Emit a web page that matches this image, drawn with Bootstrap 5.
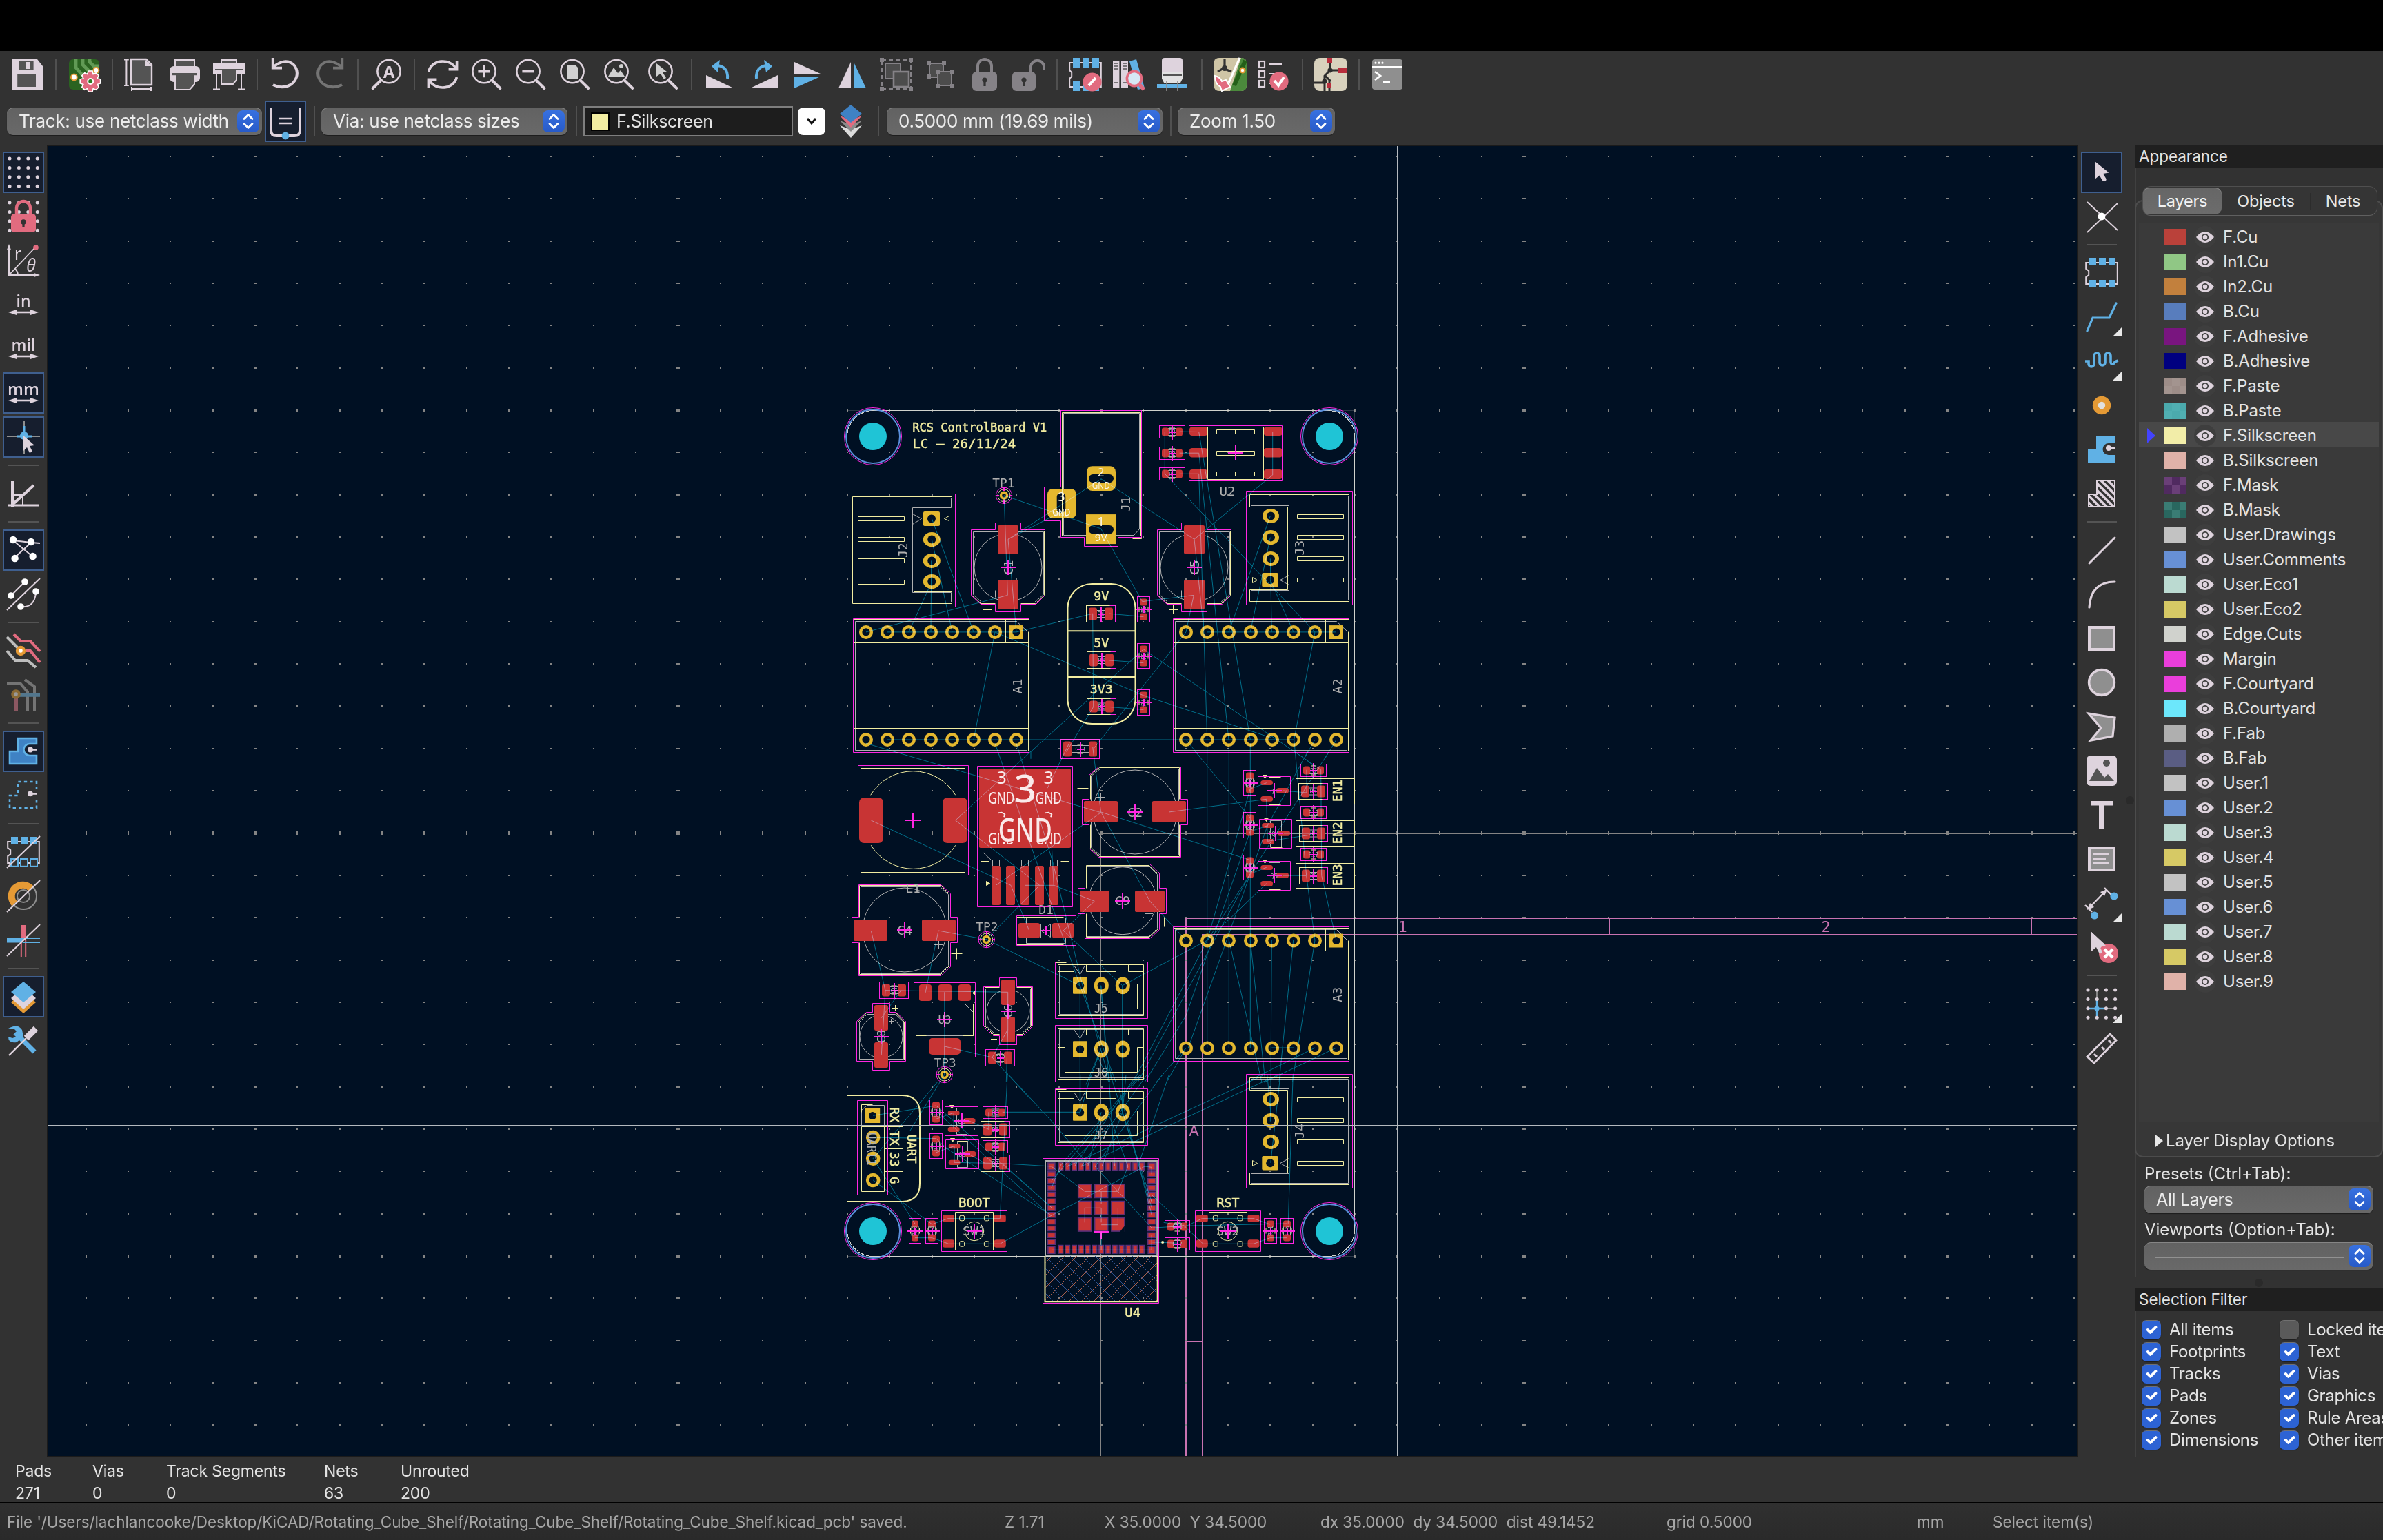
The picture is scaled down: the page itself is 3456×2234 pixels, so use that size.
<!DOCTYPE html>
<html lang="en">
<head>
<meta charset="utf-8">
<title>PCB Editor</title>
<link href="https://cdn.jsdelivr.net/npm/bootstrap@5.3.0/dist/css/bootstrap.min.css" rel="stylesheet">
<style>
  html, body { width: 3456px; height: 2234px; overflow: hidden; }
  body { background: #323232; color: #e3e3e3; font-family: Inter, "Liberation Sans", sans-serif; font-size: 24px; line-height: 1; }
  .menu-strip { height: 74px; background: #000; }
  .tool-row { height: 68px; }
  .row-icons { padding-left: 8px; }
  .row-picks { padding-left: 10px; }
  .tool { width: 60px; height: 60px; margin: 2px; padding: 0; border: 3px solid transparent; border-radius: 0; flex: none; position: relative; display: flex; align-items: center; justify-content: center; }
  .tool > svg { width: 48px; height: 48px; flex: none; overflow: visible; }
  .tool.picked { background: #161e2e; border: 2px solid #3f5f8f; }
  .tool .corner { position: absolute; right: -3px; bottom: -1px; width: 14px; height: 14px; }
  .vsep { width: 2px; height: 44px; margin: 0 8px; background: #505050; flex: none; }
  .hsep { height: 2px; width: 44px; margin: 8px 0; background: #545454; flex: none; }
  .side-left { width: 68px; padding-top: 8px; }
  .side-right { width: 82px; padding-top: 8px; padding-right: 14px; position: relative; }
  .side-right .grip { position: absolute; right: 1px; top: 945px; width: 12px; height: 12px; border-radius: 50%; background: #2a2a2a; }
  .board-frame { border: 2px solid #1b1b1b; width: 2946px; height: 1904px; flex: none; background: #001023; }
  .board-frame svg { display: block; }
  .work { height: 1904px; }
  .pick { height: 40px; border-radius: 9px; background: linear-gradient(#626262, #696969); box-shadow: inset 0 1px 0 #858585, 0 1px 1px #1c1c1c; color: #ececec; padding: 0 4px 0 17px; font-size: 25px; letter-spacing: -.35px; border: 0; flex: none; }
  .tool-row .pick { font-size: 26px; letter-spacing: -.3px; }
  .step { width: 32px; height: 32px; border-radius: 8px; background: linear-gradient(#3871e0, #275ac8); flex: none; }
  .layer-box { width: 304px; height: 44px; border: 2px solid #7e7e7e; background: #1d1d1d; padding-left: 9px; font-size: 25px; letter-spacing: -.3px; }
  .chip-color { width: 27px; height: 27px; background: #f2eda1; border: 2px solid #000; margin-right: 10px; }
  .drop-btn { width: 40px; height: 40px; border-radius: 8px; background: #fff; }
  .dock { width: 360px; }
  .dock-title { height: 34px; background: #1f1f1f; padding: 0 6px; font-size: 22.5px; letter-spacing: -.05px; }
  .dock-body { border-left: 2px solid #404040; }
  .tabs { width: 341px; height: 43px; margin: 26px 0 0 9px; border: 1px solid #4f4f4f; border-bottom-color: #606060; border-radius: 12px; background: #353535; position: relative; z-index: 1; flex-wrap: nowrap; }
  .tabs .nav-link { padding: 0; height: 39px; margin-top: 1px; color: #e6e6e6; border-radius: 9px; font-size: 23.5px; letter-spacing: -.2px; display: flex; align-items: center; justify-content: center; }
  .tabs .nav-link.active { background: linear-gradient(#666, #6c6c6c); box-shadow: inset 0 1px 0 #8a8a8a; color: #f2f2f2; }
  .layer-group { margin: -23px 0 0 -2px; width: 360px; height: 1389px; border: 2px solid #4c4c4c; border-radius: 12px; background: #373737; padding: 32px 4px 0 4px; }
  .layer-list { height: 1304px; background: #3a3a3a; width: 348px; }
  .layer-item { height: 36px; padding: 4px 0 0 12px; font-size: 24px; letter-spacing: -.15px; }
  .layer-item.current { background: #484848; }
  .layer-item .mark-slot { width: 24px; }
  .swatch-box { width: 32px; height: 24px; margin-right: 12px; background-size: 24px 24px; }
  .eye { width: 32px; height: 32px; border-radius: 50%; background: #3e3e3e; margin-right: 10px; }
  .display-toggle { height: 54px; padding-left: 24px; letter-spacing: -.1px; }
  .view-options { padding: 11px 0 0 12px; }
  .filter-grid { padding: 11px 0 0 8px; }
  .filter-grid .form-check { width: 200px; height: 32px; margin: 0; padding: 0; min-height: 0; display: flex; align-items: center; white-space: nowrap; flex: none; letter-spacing: -.3px; }
  .filter-grid .form-check-input { width: 28px; height: 28px; margin: 0 12px 0 0; float: none; border: 0; border-radius: 7px; background-color: #5a5a5a; flex: none; box-shadow: inset 0 1px 0 #707070, 0 1px 1px #1c1c1c; }
  .filter-grid .form-check-input:checked { background-color: #2d63d4; background-size: 26px; }
  .stats { height: 65px; padding: 4px 0 0 22px; font-size: 23px; letter-spacing: -.2px; line-height: 32px; }
  .status-line { height: 55px; border-top: 2px solid #000; background: linear-gradient(#303030, #2a2a2a); color: #a6a6a6; font-size: 22.5px; letter-spacing: -.02px; padding: 1px 0 0 10px; white-space: pre; }
  .status-line div { flex: none; }
  .status-line .file-note { letter-spacing: -.09px; }
</style>
</head>
<body class="d-flex flex-column m-0">
<div class="menu-strip flex-shrink-0"></div>

<header class="flex-shrink-0">
  <div class="tool-row row-icons d-flex align-items-center" data-tools="save | setup | page print plot | undo redo | find | refresh zin zout zfit zobj zsel | rotl rotr flipv fliph group ungroup lock unlock | fpedit fplib fpupd | sync drc | schem | term" data-sep="vsep"></div>
  <div class="tool-row row-picks d-flex align-items-center">
    <div class="pick d-flex align-items-center justify-content-between" style="width:370px"><span>Track: use netclass width</span><span class="step"></span></div>
    <div style="margin-left:2px" data-tools="*autow"></div>
    <div class="vsep" style="margin:0 9px 0 9px"></div>
    <div class="pick d-flex align-items-center justify-content-between" style="width:357px"><span>Via: use netclass sizes</span><span class="step"></span></div>
    <div class="vsep" style="margin:0 9px 0 12px"></div>
    <div class="layer-box d-flex align-items-center"><span class="chip-color"></span>F.Silkscreen</div>
    <div class="drop-btn d-flex align-items-center justify-content-center" style="margin-left:7px"><svg width="16" height="12" viewBox="0 0 16 12"><path d="M2 2l6 7 6-7" fill="none" stroke="#111" stroke-width="3"/></svg></div>
    <div style="margin-left:5px" data-tools="stack"></div>
    <div class="vsep" style="margin:0 11px 0 7px"></div>
    <div class="pick d-flex align-items-center justify-content-between" style="width:400px"><span>0.5000 mm (19.69 mils)</span><span class="step"></span></div>
    <div class="vsep" style="margin:0 9px 0 11px"></div>
    <div class="pick d-flex align-items-center justify-content-between" style="width:228px"><span>Zoom 1.50</span><span class="step"></span></div>
  </div>
</header>

<main class="work d-flex flex-shrink-0">
  <nav class="side-left d-flex flex-column align-items-center flex-shrink-0" data-tools="*grid gridlock polar in mil *mm *cursor | angle | *rats ratcurve | netcolor dimnet | *zonefill zoneout | fpout padout trackout | *layersicon wrench" data-sep="hsep"></nav>

  <section class="board-frame"><svg id="board" width="2942" height="1900" viewBox="70 212 2942 1900"></svg></section>

  <nav class="side-right d-flex flex-column align-items-center flex-shrink-0" data-tools="*arrow cross | addfp route+ tune+ via zone rulearea | line arc rect circle poly image text textbox dim+ delete | origin+ ruler" data-sep="hsep"></nav>

  <aside class="dock d-flex flex-column flex-shrink-0">
    <div class="dock-title d-flex align-items-center flex-shrink-0">Appearance</div>
    <div class="dock-body flex-shrink-0" style="height:1609px">
      <div class="tabs nav nav-pills d-flex">
        <a class="nav-link active" style="width:114px">Layers</a>
        <a class="nav-link" style="width:128px">Objects</a>
        <span style="width:2px;height:24px;background:#2c2c2c;margin-top:9px"></span>
        <a class="nav-link" style="width:92px">Nets</a>
      </div>
      <div class="layer-group">
        <div class="layer-list" id="layers"></div>
        <div class="display-toggle d-flex align-items-center"><svg width="11" height="18" viewBox="0 0 11 18" style="margin-right:4px"><path d="M0 0l11 9-11 9z" fill="#e8e8e8"/></svg>Layer Display Options</div>
      </div>
      <div class="view-options">
        <div style="height:30px;line-height:26px">Presets (Ctrl+Tab):</div>
        <div class="pick d-flex align-items-center justify-content-between" style="width:332px"><span>All Layers</span><span class="step"></span></div>
        <div style="height:42px;line-height:48px">Viewports (Option+Tab):</div>
        <div class="pick d-flex align-items-center justify-content-between" style="width:332px;padding-left:16px"><span style="width:274px;height:2px;background:#919191;margin-top:4px"></span><span class="step"></span></div>
      </div>
    </div>
    <div class="flex-shrink-0 d-flex align-items-center justify-content-center" style="height:15px"><span style="width:12px;height:12px;border-radius:50%;background:#2a2a2a"></span></div>
    <div class="dock-title d-flex align-items-center flex-shrink-0">Selection Filter</div>
    <div class="dock-body flex-grow-1 overflow-hidden">
      <div class="filter-grid" id="filters"></div>
    </div>
  </aside>
</main>

<section class="stats d-flex flex-shrink-0">
  <div style="width:112px">Pads<br>271</div><div style="width:107px">Vias<br>0</div><div style="width:229px">Track Segments<br>0</div><div style="width:111px">Nets<br>63</div><div>Unrouted<br>200</div>
</section>
<footer class="status-line d-flex align-items-center flex-shrink-0"><div class="file-note" style="width:1447px">File '/Users/lachlancooke/Desktop/KiCAD/Rotating_Cube_Shelf/Rotating_Cube_Shelf/Rotating_Cube_Shelf.kicad_pcb' saved.</div><div style="width:145px">Z 1.71</div><div style="width:313px">X 35.0000  Y 34.5000</div><div style="width:502px">dx 35.0000  dy 34.5000  dist 49.1452</div><div style="width:363px">grid 0.5000</div><div style="width:110px">mm</div><div>Select item(s)</div></footer>

<script src="https://cdn.jsdelivr.net/npm/bootstrap@5.3.0/dist/js/bootstrap.bundle.min.js"></script>
<script>
/* ---------- toolbar icons, drawn on a 24 unit grid ---------- */
const L='#ded3dd', B='#60b1e5', K='#e26b7f', G='#8f8f8f', D='#545454', O='#e59a35', N='#323232', Q='#858287';
const st=(c,w,d,x='')=>`<path d="${d}" fill="none" stroke="${c}" stroke-width="${w}" ${x}/>`;
const fl=(c,d,x='')=>`<path d="${d}" fill="${c}" ${x}/>`;
const ci=(c,x,y,r,e='')=>`<circle cx="${x}" cy="${y}" r="${r}" fill="${c}" ${e}/>`;
const re=(c,x,y,w,h,e='')=>`<rect x="${x}" y="${y}" width="${w}" height="${h}" fill="${c}" ${e}/>`;
const tx=(x,y,s,t,e='')=>`<text x="${x}" y="${y}" font-size="${s}" fill="${L}" text-anchor="middle" font-family="Open Sans, sans-serif" ${e}>${t}</text>`;
const lens=(x=0)=>`<circle cx="${x+10}" cy="9.8" r="8.3" fill="none" stroke="${L}" stroke-width="1.3"/>`+st(L,2,`M${x+15} 15.5L${x+22.3} 22.6`);
const slash=st(L,1,'M0 23.5L24 .5');
const dots=(x0,y0,dx,dy)=>{let s='';for(let i=0;i<4;i++)for(let j=0;j<4;j++)s+=ci(L,x0+i*dx,y0+j*dy,1.25);return s};
const unit=(t,s)=>tx(12,13.4,s,t,'font-weight="600"')+st(L,1.3,'M4 17.5H20')+fl(L,'M1 17.5l6-2v4z')+fl(L,'M23 17.5l-6-2v4z');
const fp=(bot=B)=>st(L,1,'M3 4.5H.6V9l2 1.5v3L.6 15v5H23.4V4.5H3')+[3,10,17].map(x=>re(B,x,1,5,5.4)+re(bot,x,17,5,5.4,bot===N?`stroke="${B}"`:'')).join('');
const hook='M1 20V11h6V2h14v3.5h-4.5a4.5 4.5 0 0 0 0 9H21V20z';
const ICON={
save:fl(L,'M1 1h18l4 5v17H1z')+re(D,5.8,2,10.5,7)+re(L,10.9,3,3,5)+re(D,4.6,12,13.4,9),
setup:re('#2a6320',1,1,22,22,'rx="3"')+st('#619a55',2.4,'M6 1v6l6 7v9M11 1v4l5 5h7M16 1v2l3 3h4')+ci('#fff',4.7,14,2.2,`stroke="${O}"`)+ci('#fff',20.7,9,2,`stroke="${O}"`)+fl(K,'M15 9.5h3l.6 2.3 2-1 2 2-1 2 2.2.7v3l-2.2.7 1 2-2 2-2-1-.6 2.3h-3l-.6-2.3-2 1-2-2 1-2-2.3-.7v-3l2.3-.7-1-2 2-2 2 1z','stroke="#fff" stroke-width=".8"')+ci('#2a7a20',16.6,17,2,'stroke="#fff"'),
page:fl(D,'M5 1h11l4 4v14.5H5z',`stroke="${L}" stroke-width="1.2"`)+fl(L,'M15 1v5h5z')+st(L,1,'M0 1.3h3.4M1.7 1v19M0 20h3.4M5.5 22.5h14M5.5 21v3M19.5 21v3'),
print:re(D,5,1.5,14,6,`stroke="${L}"`)+re(L,1,6,22,11.5,'rx="3"')+fl(D,'M5 12h14v7l-3.5 4H5z',`stroke="${L}"`)+re(D,3,11,18,1.6),
plot:re(D,6.5,1.5,11,6,`stroke="${L}"`)+re(L,.5,4,23,7.5)+fl(D,'M6.5 8h11v8l-2.5 3h-8.500z',`stroke="${L}"`)+re(D,2,8,20,1)+st(L,1,'M3 11v12M21 11v12M.5 22.700h5M18.500 22.700h5'),
undo:st(L,2,'M3.500 6.500C13-2 22.500 5 20 14 18 20.500 10 23 3 19.500')+st(L,1.8,'M2.800 0V7.300H9.500'),
redo:st('#747474',2,'M20.500 6.500C11-2 1.500 5 4 14 6 20.500 14 23 21 19.500')+st('#747474',1.8,'M21.200 0V7.300H14.500'),
find:`<circle cx="14" cy="9.800" r="8.300" fill="none" stroke="${L}" stroke-width="1.300"/>`+st(L,2,'M9 15.500L1.700 22.600')+tx(14,14.300,12,'A','font-weight="700"'),
refresh:st(L,1.800,'M1.800 10C4 1 17 0 21.500 7.500M22.200 14C20 23 7 24 2.500 16.500')+st(L,1.800,'M22.300 2v6.300h-6M1.700 22v-6.300h6'),
zin:lens()+st(L,1.800,'M10 5.500v8.600M5.700 9.800h8.600'),
zout:lens()+st(L,1.800,'M5.700 9.800h8.600'),
zfit:lens()+fl('#d0d0d0','M6.500 5h5.500l2 2v8H6.500z'),
zobj:lens()+fl('#d0d0d0','M4 13.500L8 7l3 4 2-2 3 4.500z')+ci('#d0d0d0',13.500,6,1.500),
zsel:lens()+fl('#d0d0d0','M7 4l7.500 6-3 .5 2.500 4-1.500 1-2.500-4L7 13.500z'),
rotl:fl(L,'M2 12.500V21.500H21z')+st(B,2,'M17.500 15C18 9 15 5.500 9 5.500')+fl(B,'M6 6l6-4.500-1.500 9z'),
rotr:fl(L,'M22 12.500V21.500H3z')+st(B,2,'M6.500 15C6 9 9 5.500 15 5.500')+fl(B,'M18 6l-6-4.500 1.500 9z'),
flipv:fl(L,'M2 3v8.500h19z')+fl(B,'M2 22v-8.500h19z'),
fliph:fl(L,'M11 3v19H2z')+fl(B,'M13 3v19h9z'),
group:`<rect x="1.500" y="1.500" width="21" height="21" fill="none" stroke="${Q}" stroke-dasharray="3 2"/>`+re('#4c4c4c',4,4,11,11,`stroke="${Q}"`)+re('#4c4c4c',10,10,11,11,`stroke="${Q}" stroke-width="1.300"`)+[[0,0],[21,0],[0,21],[21,21]].map(p=>re(Q,p[0],p[1],3,3)).join(''),
ungroup:re('#4c4c4c',4,4,10,10,`stroke="${Q}"`)+re('#4c4c4c',10,10,10,10,`stroke="${Q}"`)+[[2,2],[13,2],[2,12],[8.500,8.500],[19,8.500],[8.500,19],[19,19]].map(p=>re(Q,p[0],p[1],3,3)).join(''),
lock:re(Q,3,10,18,14,'rx="3"')+st(Q,2,'M7 11V6a5 5 0 0 1 10 0v5')+ci(N,12,16,1.800)+re(N,11.200,16,1.600,4.500),
unlock:re(Q,0,10,17,14,'rx="3"')+st(Q,2,'M13.500 11V6a4.800 4.800 0 0 1 9.500 0v3')+ci(N,8.500,16,1.800)+re(N,7.700,16,1.600,4.500),
fpedit:st(L,1,'M3 3.500H.6V9l1.500 1.500v3L.6 15v6H23.400V3.500H3')+[3,10,17].map(x=>re(B,x,0,5,7)+re(B,x,17,5,7)).join('')+ci(K,17,17.500,6.800)+st('#fff',2,'M14.500 20l5-5.500'),
fplib:re(L,0,2,4.700,20)+re(L,6,2,5,20)+fl(B,'M12 2.500l5-1.500 6 21-5 1z')+st(D,.8,'M1 4h3M1 6h3M1 8h3M7 4h3M7 6h3M7 8h3M1 18h3M7 18h3')+ci('#d6e8f5',15.500,15,5.300,`stroke="${K}" stroke-width="1.800"`)+st(K,2.600,'M19.500 19.500l3 3.500'),
fpupd:re(L,3.500,0,15,12,'rx="2"')+fl('#e2e2e2','M3.500 10h15v5l-1.500 3H5l-1.500-3z')+st(D,1,'M4 12.500h14')+re(B,0,19,22,3)+st(G,.8,'M7 17v7M15 17v7'),
sync:re('#cfc5a6',0,0,24,24,'rx="4"')+fl('#4b8a3c','M20 0q4 0 4 4v16q0 4-4 4H12z')+st('#245f18',3,'M23 2l-8 18')+st('#fff',1.600,'M19 0L11 18')+st('#333',1.600,'M8 1v6l-5 3M8 8l5 2')+ci('#333',8,7.500,2)+ci('#fff',21,9,1.700,`stroke="${O}" stroke-width="1.200"`)+fl(K,'M1 13q4 1 5 4l3-1 3 5-6 3-1-3q-4-2-4-8z','stroke="#fff" stroke-width="1"'),
drc:[2.500,9.500,16.500].map(y=>`<rect x="1" y="${y}" width="4" height="4.500" fill="none" stroke="${L}" stroke-width="1.100"/>`).join('')+st(L,1,'M8 4.500h9.500M8 11.500h5M8 18.500h3')+ci(K,15.500,17,6.800)+st('#fff',1.900,'M12 16.500l3 3.500 4-6'),
schem:re('#d8d1bd',0,0,24,24,'rx="4"')+st('#2d2d2d',1.500,'M11.500 4v5M11.500 9l8 0M11.500 9l-4 4v11M0 18h7M11 15v9M8 13l4 4')+re('#b82d3c',9,0,4,4)+re('#b82d3c',17.500,7,6.500,4)+re('#b82d3c',9,18.500,3,3.500)+ci('#2d2d2d',11.500,9,1.800)+ci('#2d2d2d',7.500,17,1.800),
term:re(G,1,1,22,22,'rx="2"')+re('#fff',1,6,22,1)+ci('#fff',3.500,3.600,.8)+ci('#fff',6,3.600,.8)+ci('#fff',8.500,3.600,.8)+st('#fff',1.400,'M3 10l4 3-4 3')+st('#fff',1.200,'M9 17.500h5'),
autow:st(L,2,'M1.500 2.500v16q0 4 4 4h13q4 0 4-4v-16')+st(L,1.200,'M7 10h10M7 13.500h10')+ci(B,12,22.500,2.700),
stack:fl('#dcdcdc','M4 15l8 9 8-9-8 3z')+fl('#8b8b8b','M4 11.500l8 8 8-8-8 3z')+fl(K,'M4 8l8 8.500L20 8l-8 3z')+fl('#3f82c4','M12 0l8 6.500-8 6.500-8-6.500z'),
grid:dots(2,2,6.700,6.700),
gridlock:dots(2,2,6.700,6.700)+re(K,3,10,18,13.500,'rx="2.500"')+st(K,2.200,'M7 10.500V6a5 5 0 0 1 10 0v4.500')+ci(N,12,16,1.900)+re(N,11.200,16.500,1.600,3.500),
polar:st(L,1.100,'M1.500 3V22.500H21')+fl(L,'M1.500 0l1.400 4H.1z')+fl(L,'M24 22.500l-4-1.400v2.800z')+st(L,.9,'M1.500 22.500L20 3M6 18q2 2 2 4.500')+ci(K,21,2.500,1.900)+tx(8,11.500,13,'r')+tx(17.500,20,12.500,'θ','font-style="italic"'),
in:unit('in',11.500), mil:unit('mil',11.500), mm:unit('mm',12),
cursor:st(G,1,'M12.500 0v24M0 11.500h24')+st(B,1.500,'M12.500 4v14M7 11.500h11')+ci(B,12.500,11,3)+fl(L,'M12 11l8 7-3.500.5 2 4-2 1-2-4-2.500 2.500z'),
angle:st(L,2,'M4 3v19')+st(L,1.600,'M1 20.500h22')+st(L,2,'M4 20L19.500 6')+st(L,1,'M4 13h7.500v7'),
rats:st(L,1,'M4.500 5l13 1.500 6.500.5M4.500 5l14 11.500M5.500 17.500l12-11')+[[4.500,4.500],[17.500,6],[5.800,18],[18.800,16.500]].map(p=>ci('#fff',p[0],p[1],2.600)).join(''),
ratcurve:st(L,1,'M0 23.500L24 .5M3 13L13 3M10 21q10 1 11-10')+[[3,13],[13,3],[21,10],[10,21]].map(p=>ci('#fff',p[0],p[1],2.400)).join(''),
netcolor:st(K,2,'M5 0l5 5h7l7 7.500M14 12h3l7 8.500')+st('#bdbdbd',2,'M0 2l9 9M0 12l6 7h9l6 5')+ci('#fff',10,12,2.500,`stroke="${O}" stroke-width="2.200"`),
dimnet:st('#747474',2,'M0 4h10l5 6v14M13 1l7 5v18')+st('#52768d',2.800,'M8 12h16')+st('#8c5862',3,'M6.500 13v11')+ci('#999',6.500,11.500,2.400,'stroke="#8a6a35" stroke-width="2"'),
zonefill:fl('#3f82c4','M2 21V12h6V2.500h13.500v4h-5a4.200 4.200 0 0 0 0 8.500h5v6z',`stroke="${B}" stroke-width="1.300"`)+st(L,1.400,'M16 10.700h6')+ci(L,17,10.700,2),
zoneout:`<path d="M2 21V12h6V2h13.500v5M21.500 15v6H2" fill="none" stroke="${B}" stroke-width="1.300" stroke-dasharray="2.200 2"/>`+st(L,1.400,'M16 10.700h6')+ci(L,17,10.700,1.900),
fpout:fp(N)+slash,
padout:`<circle cx="12" cy="12" r="9.500" fill="none" stroke="${G}"/><circle cx="12" cy="12" r="4.500" fill="none" stroke="${G}"/>`+st(O,5,'M5.500 17.500a7.800 7.800 0 0 1 12-11')+slash,
trackout:st(K,4,'M12 1v11')+st(K,1,'M10.400 12v12M13.600 12v12')+st(B,3.500,'M0 12h12')+st(B,1,'M12 10.500h12M12 13.500h12')+slash,
layersicon:fl(O,'M12 8l9 8-9 8-9-8z')+fl(L,'M12 5l9 8-9 8-9-8z')+fl(B,'M12 1l9 7.500-9 7.500-9-7.500z'),
wrench:st(B,3.500,'M6 6l14 14')+fl(B,'M1 3l4 0 3 3-1 3-3 1-3-1q0 5 6 4l5-4-1-5Q8-1 1 3z')+st(L,1.200,'M1.500 22.500L14 10')+st(L,4.500,'M14 10L21 3'),
arrow:fl(L,'M7 4v13l3.400-2.800 2 3.600q1.500 1.600 2.800 0 .4-.8-.2-1.600l-2-3.200 4.200-.8z'),
cross:st(L,.9,'M1.500 1.500L23.500 22M1.500 23.500L23.500 2.500')+ci('#fff',12,12,2.700),
addfp:fp(),
route:st(B,1.600,'M2 22L6 12.500h12L23 2','transform="translate(-.5 0)" stroke-linecap="round"'),
tune:st(B,1.800,'M0 12h2.500v2a2 2 0 0 0 4 0V8a2 2 0 0 1 4 0v5a2 2 0 0 0 4 0V8a2 2 0 0 1 4 0v4.500q0 2 2 1.500 1-2 3.500-2.500'),
via:ci('#e0e0e0',12,12,4.600,`stroke="${O}" stroke-width="4"`),
zone:fl(B,'M2 22V12h6V2h14v5.500h-5a3.800 3.800 0 0 0 0 8.500H22v6z')+st(L,1.600,'M17 11h5')+ci(L,17,11,2),
rulearea:`<clipPath id="ra"><path d="M2 22V12.500h6V2.500h14V22z"/></clipPath><g clip-path="url(#ra)">`+[-18,-13,-8,-3,2,7,12,17].map(x=>st(L,1.800,`M${x} -2L${x+26} 24`)).join('')+'</g>'+st(L,1,'M2.500 21.500V12.500h6V2.500h13V21.500z'),
line:st(L,1.500,'M3 21.500L21.500 3','stroke-linecap="round"'),
arc:st(L,1.600,'M3 21.500Q4 3 21.500 3','stroke-linecap="round"'),
rect:re(G,3,4,18,16,`stroke="${L}" stroke-width="2"`),
circle:ci(G,12,12,9.200,`stroke="${L}" stroke-width="1.800"`),
poly:fl(G,'M2.500 2.500l19 3L20 19 4 22l7.500-9z',`stroke="${L}" stroke-width="1.600"`),
image:re(L,1,1,22,22,'rx="3"')+fl(D,'M3 19.500L8.500 10l5.500 7 2.500-2.500L21 19.500z')+ci(D,15.500,6.500,2.500),
text:fl(L,'M4 2h16v3.200h-6V22h-4V5.200H4z'),
textbox:re(G,3,4,18,16,`stroke="${L}" stroke-width="2"`)+st(L,1.100,'M6 8.500h11.500M6 12h9M6 15h11'),
dim:st(L,1.200,'M2.500 16L15 3M14 1l5 5M0 13.500l5 5')+fl(L,'M1.500 17l2-5 3 3z')+fl(L,'M16 2l-2 5-3-3z')+ci(B,21,7,2.800)+ci(B,6.800,21,2.800),
delete:fl(L,'M4 .5v15l4-4 3 4h2l-1-4h4z')+ci(K,17,16.500,7)+fl(L,'M4 .5v15l4-3.500 2 4q2 1.500 2.500-.5l-2-4 4.500-.5z')+st('#fff',2.200,'M14 13.500l6 6M20 13.500l-6 6'),
origin:st(G,.9,'M8.500 1v22M2 15.500h20')+st(B,1.200,'M8.500 9v12M3 15.500h11')+dots(2,2,6.600,6.700)+ci(B,8.500,15.500,1.800),
ruler:st(L,1.500,'M1.500 18.500L18 2l4.500 4.500L6.500 23z')+st(L,1.500,'M6.500 16.500l2 2M12 11.500l2 2M17 6.500l2 2')
};
document.querySelectorAll('[data-tools]').forEach(bar=>{
  bar.innerHTML=bar.dataset.tools.split(' ').map(t=>{
    if(t==='|')return `<div class="${bar.dataset.sep}"></div>`;
    const on=t[0]==='*', more=t.endsWith('+'), n=t.replace(/[*+]/g,'');
    return `<button type="button" class="btn tool${on?' picked':''}" aria-label="${n}"><svg viewBox="0 0 24 24">${ICON[n]}</svg>${more?'<svg class="corner" viewBox="0 0 14 14"><path d="M14 0v14H0z" fill="#e8e8e8"/></svg>':''}</button>`;
  }).join('');
});
document.querySelector('.side-right').insertAdjacentHTML('beforeend','<span class="grip"></span>');
document.querySelectorAll('.step').forEach(s=>s.innerHTML='<svg width="32" height="32" viewBox="0 0 32 32"><path d="M10 12.500l6-6 6 6M10 19.500l6 6 6-6" fill="none" stroke="#fff" stroke-width="2.800" stroke-linecap="round" stroke-linejoin="round"/></svg>');

/* ---------- layer list and filters ---------- */
const chk=(a,b)=>`repeating-conic-gradient(${a} 0 25%, ${b} 0 50%)`;
const LAYERS=[['F.Cu','#ba413a'],['In1.Cu','#90c785'],['In2.Cu','#c2803d'],['B.Cu','#587dbd'],['F.Adhesive','#79157f'],['B.Adhesive','#000080'],['F.Paste',chk('#a3948f','#9d8d88')],['B.Paste',chk('#50afb2','#4baaad')],['F.Silkscreen','#f2eda8'],['B.Silkscreen','#e0b2a9'],['F.Mask',chk('#502a60','#6a3f78')],['B.Mask',chk('#29675f','#3a7c74')],['User.Drawings','#c2c2c2'],['User.Comments','#6790d5'],['User.Eco1','#bbdad1'],['User.Eco2','#d6c965'],['Edge.Cuts','#d0d2cd'],['Margin','#ea3edb'],['F.Courtyard','#ea3edb'],['B.Courtyard','#6ce7fb'],['F.Fab','#afafaf'],['B.Fab','#5a5d83'],['User.1','#c2c2c2'],['User.2','#6790d5'],['User.3','#bbdad1'],['User.4','#d6c965'],['User.5','#c2c2c2'],['User.6','#6790d5'],['User.7','#bbdad1'],['User.8','#d6c965'],['User.9','#e0b2a9']];
document.getElementById('layers').innerHTML=LAYERS.map(([n,c])=>`<div class="layer-item d-flex align-items-center${n==='F.Silkscreen'?' current':''}"><span class="mark-slot">${n==='F.Silkscreen'?'<svg width="12" height="22" viewBox="0 0 12 22" style="display:block"><path d="M0 0l12 11L0 22z" fill="#4343ff"/></svg>':''}</span><span class="swatch-box" style="background-image:${c[0]==='#'?`linear-gradient(${c},${c})`:c}"></span><span class="eye d-flex align-items-center justify-content-center"><svg width="26" height="16" viewBox="0 0 26 16"><path d="M0 8Q13-8 26 8 13 24 0 8z" fill="#ded3dd"/><circle cx="13" cy="8" r="4.200" fill="#ded3dd" stroke="#3e3e3e" stroke-width="1.800"/></svg></span>${n}</div>`).join('');
const FILT=[['All items','Locked items'],['Footprints','Text'],['Tracks','Vias'],['Pads','Graphics'],['Zones','Rule Areas'],['Dimensions','Other items']];
document.getElementById('filters').innerHTML=FILT.map(r=>'<div class="d-flex">'+r.map(t=>`<div class="form-check"><input class="form-check-input" type="checkbox" ${t==='Locked items'?'':'checked'}><label>${t}</label></div>`).join('')+'</div>').join('');

/* ---------- board drawing ---------- */
const SILK='#f2eda1', CY='#ff26e2', FAB='#afafaf', CU='#c83434', TH='#e3b72e', BG='#001023', SHEET='#c872b0';
const lay={sheet:[],grid:[],edge:[],fab:[],pads:[],silk:[],cy:[],cross:[],text:[],rats:[]};
let X0=0,Y0=0,SX=1,SY=1,OX=0,OY=0;
const sec=(a,b,c,d)=>{X0=a;Y0=b;SX=c;SY=d;};
const at=(dx,dy,f)=>{OX=dx;OY=dy;f();OX=0;OY=0;};
const px=u=>+(X0+OX+u/SX).toFixed(1), py=v=>+(Y0+OY+v/SY).toFixed(1);
const hx=u=>Math.floor(px(u))+.5, hy=v=>Math.floor(py(v))+.5;
const path=(l,c,w,a,close,fill='none')=>{const fx=w===1&&l!=='rats'&&l!=='text'?hx:px,fy=fx===hx?hy:py;let d='';for(let i=0;i<a.length;i+=2)d+=(i?'L':'M')+fx(a[i])+' '+fy(a[i+1]);lay[l].push(`<path d="${d}${close?'z':''}" fill="${fill}" stroke="${c}" stroke-width="${w}"/>`);};
const box=(l,c,x1,y1,x2,y2,w=1)=>path(l,c,w,[x1,y1,x2,y1,x2,y2,x1,y2],1);
const silk=(a,c,w=1)=>path('silk',SILK,w,a,c), fab=(a,c,w=1)=>path('fab',FAB,w,a,c), cy=(a)=>path('cy',CY,1,a,1), rat=(...a)=>path('rats','#006476',1,a,0);
const sbox=(a,b,c,d,w)=>box('silk',SILK,a,b,c,d,w), fbox=(a,b,c,d,w)=>box('fab',FAB,a,b,c,d,w), cbox=(a,b,c,d)=>box('cy',CY,a,b,c,d);
const pad=(x1,y1,x2,y2,r=3,c=CU,l='pads')=>lay[l].push(`<rect x="${px(x1)}" y="${py(y1)}" width="${(px(x2)-px(x1)).toFixed(1)}" height="${(py(y2)-py(y1)).toFixed(1)}" rx="${r}" fill="${c}"/>`);
const ring=(l,c,x,y,r,w=1,f='none')=>lay[l].push(`<circle cx="${px(x)}" cy="${py(y)}" r="${r}" fill="${f}" stroke="${c}" stroke-width="${w}"/>`);
const thp=(x,y,rx=10,ry=10,h=5.6)=>lay.pads.push(`<ellipse cx="${px(x)}" cy="${py(y)}" rx="${rx}" ry="${ry}" fill="${TH}"/><circle cx="${px(x)}" cy="${py(y)}" r="${h}" fill="${BG}"/>`);
const ths=(x1,y1,x2,y2,h=5.8,r=1)=>{pad(x1,y1,x2,y2,r,TH);lay.pads.push(`<circle cx="${px((x1+x2)/2)}" cy="${py((y1+y2)/2)}" r="${h}" fill="${BG}"/>`);};
const T=(x,y,s,size,c=FAB,rot=0,len=0,f='DejaVu Sans Mono',wt=400)=>lay.text.push(`<text transform="translate(${px(x)} ${py(y)}) rotate(${rot})" y="${(size*.365).toFixed(1)}" font-size="${size}" fill="${c}" ${wt===700?`stroke="${c}" stroke-width=".45"`:`font-weight="${wt}"`} font-family="${f}, monospace" text-anchor="middle" ${len?`textLength="${len}" lengthAdjust="spacingAndGlyphs"`:''}>${s}</text>`);
const X=(x,y,h=11)=>{const a=px(x),b=py(y);lay.cross.push(`<path d="M${a-h} ${b}h${2*h}M${a} ${b-h}v${2*h}" stroke="${CY}" stroke-width="2"/>`);};
const plus=(l,c,x,y,h)=>{const a=hx(x),b=hy(y);lay[l].push(`<path d="M${a-h} ${b}h${2*h}M${a} ${b-h}v${2*h}" stroke="${c}" fill="none"/>`);};
/* two-terminal part: courtyard given, pads at the ends of the long side */
const part=(x1,y1,x2,y2,name,led)=>{
  const a=hx(x1),b=hy(y1),w=hx(x2)-a,h=hy(y2)-b,v=h>w,k=Math.max(w,h)>39?12:10,i=3.500,j=3,cx=a+w/2,cyy=b+h/2;
  const p=(x,y,pw,ph)=>lay.pads.push(`<rect x="${x}" y="${y}" width="${pw}" height="${ph}" rx="3" fill="${CU}"/>`);
  if(v){p(a+i,b+j,w-2*i,k);p(a+i,b+h-j-k,w-2*i,k);}else{p(a+i,b+j,k,h-2*j);p(a+w-i-k,b+j,k,h-2*j);}
  lay.fab.push(v?`<path d="M${cx-5} ${b+11}v${h-22}M${cx+5} ${b+11}v${h-22}" stroke="${FAB}"/>`:`<path d="M${a+12} ${cyy-5}h${w-24}M${a+12} ${cyy+5}h${w-24}" stroke="${FAB}"/>`);
  if(!led)lay.silk.push(v?`<path d="M${cx-6.500} ${cyy-4}v8M${cx+6.500} ${cyy-4}v8" stroke="${SILK}"/>`:`<path d="M${cx-4} ${cyy-6.500}h8M${cx-4} ${cyy+6.500}h8" stroke="${SILK}"/>`);
  const m=led?SILK:CY;lay.cy.push(`<rect x="${a}" y="${b}" width="${w}" height="${h}" fill="none" stroke="${m}"/>`);
  if(led)lay.cy.push(`<path d="M${a+w-8} ${b}h8v${h}h-8" fill="none" stroke="${CY}"/>`);
  lay.cross.push(`<path d="M${cx-(v?11:5)} ${cyy}h${v?22:10}M${cx} ${cyy-(v?5:11)}v${v?10:22}" stroke="${CY}" stroke-width="2"/>`);
  lay.text.push(`<text transform="translate(${cx} ${cyy}) rotate(${v?-90:0})" y="3" font-size="8" fill="${FAB}" text-anchor="middle" font-family="DejaVu Sans Mono, monospace">${name}</text>`);
};

/* grid, origin axes, cursor, drawing sheet */
for(let i=-24;i<=23;i++)for(let j=-16;j<=14;j++){const w=i%10?2:5,h=j%10?2:5;lay.grid.push(`<rect x="${Math.round(1597+i*61.350-w/2)}" y="${Math.round(1208.500+j*61.350-h/2)}" width="${w}" height="${h}"/>`);}
path('sheet',SHEET,2,[3020,1332,1720,1332,1720,2120]);path('sheet',SHEET,2,[3020,1356,1744,1356,1744,2120]);
path('sheet',SHEET,2,[2334,1332,2334,1356]);path('sheet',SHEET,2,[2946,1332,2946,1356]);path('sheet',SHEET,2,[1720,1946,1744,1946]);
T(2034,1344,'1',22,SHEET);T(2648,1344,'2',22,SHEET);T(1731.500,1640,'A',22,SHEET,0,0,'Noto Sans');
path('edge','#848484',1,[1596,2120,1596,1209,3020,1209]);
lay.edge.push(`<rect x="1228.500" y="595.500" width="736" height="1227" rx="38" fill="none" stroke="#d0d2cd" stroke-width="1"/><path d="M1228.500 640V595.500H1290M1903 595.500H1964.500V640M1964.500 1778V1822.500H1903M1290 1822.500H1228.500V1778" fill="none" stroke="#d0d2cd" stroke-opacity=".2"/>`);
[[1266,633],[1928,633],[1266,1786],[1928,1786]].forEach(([x,y])=>{ring('pads','none',x,y,20,0,'#1fc4d6');ring('pads','#5a8fdc',x,y,39,2);ring('cy',CY,x,y,41.500);});

/* ---- upper half ---- */
sec(1210,570,3,2.958);
T(632,146,'RCS_ControlBoard_V1',18,SILK,0,195,'DejaVu Sans Mono',700);T(565,217,'LC – 26/11/24',18,SILK,0,150,'DejaVu Sans Mono',700);
cy([986,76,1337,76,1337,619,1235,619,1235,658,1088,658,1088,619,986,619,986,548,914,548,914,403,986,403]);
silk([1095,614,992,614,992,84,1332,84,1332,614,1224,614]);silk([1296,625,1337,625,1337,585]);
fab([1095,611,996,611,996,88,1328,88,1328,583,1302,611,1224,611]);fab([996,214,1328,214]);
pad(1098,314,1224,420,8,TH);pad(1107,349,1215,385,6,BG);pad(927,411,1053,538,8,TH);pad(968,428,1006,515,6,BG);pad(1095,521,1224,648,0,TH);pad(1107,568,1215,605,6,BG);
T(1160,340,'2',17,'#fbf7ea',0,0,'Noto Sans');T(1160,397,'GND',14,'#fbf7ea',0,26,'Noto Sans');T(988,444,'3',18,'#fbf7ea',0,0,'Noto Sans');T(988,511,'GND',14,'#fbf7ea',0,26,'Noto Sans');T(1160,551,'1',18,'#fbf7ea',0,0,'Noto Sans');T(1160,620,'9V',14,'#fbf7ea',0,18,'Noto Sans');
T(1268,477,'J1',18,FAB,-90);
const tp=(x,y)=>{ring('pads',TH,x,y,4.500,3.500,BG);ring('silk',SILK,x,y,9);ring('cy',CY,x,y,11.700);lay.cross.push(`<path d="M${px(x)-12} ${py(y)}h5M${px(x)+7} ${py(y)}h5M${px(x)} ${py(y)-12}v5M${px(x)} ${py(y)+7}v5" stroke="${CY}" stroke-width="2"/>`);};
T(736,385,'TP1',18,FAB,0,32);tp(738,440);
/* J2 */
cbox(64,433,526,918);silk([80,446,512,446,512,498,346,498,346,853,512,853,512,903,80,903],1);fab([85,451,509,451,509,493,341,493,341,857,509,857,509,899,85,899],1);
[531,619,711,803].forEach(y=>sbox(103,y,305,y+18));silk([500,529,478,539,500,550],1);fab([341,518,379,539,341,562]);
ths(387,509,459,571,6,2);[629,720,809].forEach(y=>thp(424,y,12.500,10.500,6));T(297,675,'J2',18,FAB,-90);
/* C1, C5 */
[[0,'C1'],[270,'C5']].forEach(([d,n])=>at(d,0,()=>{
  cy([596,587,700,587,700,557,811,557,811,587,917,587,917,868,878,906,811,906,811,939,700,939,700,906,636,906,596,868]);
  silk([700,593,599,593,599,868,638,903,700,903]);silk([811,593,914,593,914,868,874,903,811,903]);
  fab([603,597,909,597,909,866,872,899,640,899,603,866],1);ring('fab',FAB,756,749,49);
  pad(711,568,801,691,2);pad(711,802,801,929,2);plus('silk',SILK,664,930,6.500);plus('fab',FAB,700,862,5);T(756,749,n,18,FAB,-90);X(756,748);}));
/* power LEDs */
lay.silk.push(`<rect x="1548.500" y="847" width="98" height="203" rx="35" fill="none" stroke="${SILK}" stroke-width="2"/>`);
silk([1015,1021,1309,1021],0,2);silk([1015,1219,1309,1219],0,2);
T(1162,871,'9V',18,SILK,0,22,'DejaVu Sans Mono',700);T(1162,1071,'5V',18,SILK,0,22,'DejaVu Sans Mono',700);T(1162,1270,'3V3',18,SILK,0,33,'DejaVu Sans Mono',700);
part(1097,913,1221,982,'D4',1);part(1100,1111,1224,1181,'D3',1);part(1100,1312,1224,1381,'D2',1);
part(986,1487,1153,1568,'C13');
/* stepper driver modules */
[[0,0,'A1'],[464,0,'A2'],[464,447.500,'A3']].forEach(([dx,dy,n])=>at(dx,dy,()=>{
  cbox(82,968,848,1543);silk([86,973,848,973,848,1025]);silk([845,1025,845,1537,86,1537,86,973]);fab([792,979,91,979,91,1533,839,1533,839,1022,792,979]);
  silk([86,1072,845,1072]);silk([86,1439,845,1439]);silk([745,973,745,1072]);
  [138,231,324,420,513,606,699].forEach(x=>thp(x,1026));ths(762,997,822,1056,5.600,0);[138,231,324,420,513,606,699,792].forEach(x=>thp(x,1488));
  T(795,1258,n,18,FAB,-90);}));
sec(1580,570,3,2.958);
part(304,140,416,193,'R3');part(304,232,416,286,'R2');part(304,320,416,374,'R1');
cbox(433,140,839,377);[[146,183],[237,277],[328,370]].forEach(([a,b])=>{pad(435,a,514,b,4);pad(758,a,839,b,4);});
sbox(514,146,758,371);[158,250,339].forEach(y=>{sbox(553,y,719,y+18);silk([635,y,635,y+18]);});X(636,257);T(600,421,'U2',18,FAB,0,23);
[[0,'J3'],[846,'J4']].forEach(([dy,n])=>at(0,dy,()=>{
  cbox(682,421,1145,909);silk([697,436,1130,436,1130,894,697,894,697,845,863,845,863,489,697,489],1);fab([703,442,1126,442,1126,890,703,890,703,848,868,848,868,484,703,484],1);
  [522,611,702,794].forEach(y=>sbox(904,y,1106,y+18));silk([709,792,731,803,709,814],1);fab([868,782,830,803,868,824]);
  ths(751,772,822,833,6,2);[528,620,711].forEach(y=>thp(789,y,12,10.500,6));T(913,665,n,18,FAB,-90);}));
part(208,874,263,983,'R6');part(208,1075,263,1181,'R5');part(208,1273,263,1383,'R4');

/* ---- middle ---- */
sec(1210,1090,3,3);
cbox(103,62,584,538);sbox(115,73,569,526);pad(108,201,213,399,7);pad(471,201,579,399,7);X(342,300);T(342,594,'L1',18);
lay.silk.push(`<path d="M${px(158)} ${py(190)}A72 72 0 0 1 ${px(527)} ${py(190)}M${px(160)} ${py(409)}A72 72 0 0 0 ${px(527)} ${py(409)}" fill="none" stroke="${SILK}"/>`);
cbox(622,64,1037,676);pad(630,75,1029,420,2);fab([646,420,646,438,682,472,1013,472,1013,420]);silk([637,424,637,478,674,478]);silk([1022,424,1022,478,985,478]);
[684,747,810,873,936].forEach(x=>{pad(x,498,x+39,669,2.500);fab([x+4,472,x+4,498]);fab([x+34,472,x+34,498]);});path('silk',SILK,1,[660,564,676,574,660,584],1,SILK);
const W='#faeaea',NS='Noto Sans';
[[728,115],[932,115]].forEach(p=>T(p[0],p[1],'3',25,W,0,0,NS));[[727,203],[932,203],[727,381],[932,381]].forEach(p=>T(p[0],p[1],'GND',23,W,0,38,NS));
path('text',W,1.800,[712,268,728,266,742,274,738,286]);path('text',W,1.800,[916,268,932,266,946,274,942,286]);
T(830,160,'3',57,W,0,0,NS,500);lay.text.push(`<rect x="1449" y="1187" width="75" height="34" fill="${CU}"/>`);T(830,340,'GND',47,W,0,78,NS,500);
T(921,688,'D1',18);cbox(793,715,1051,844);silk([996,722,793,722,793,841,996,841]);fbox(835,724,1006,836);pad(801,747,894,812);pad(948,747,1041,812);fab([898,752,898,810]);fab([940,752,900,781,940,808],1);X(921,780,7);
cy([106,580,464,580,506,620,506,722,536,722,536,832,506,832,506,936,464,976,106,976,106,832,76,832,76,722,106,722]);
silk([110,722,110,583,463,583,500,620,500,722]);silk([110,832,110,970,463,970,500,934,500,832]);fab([115,588,460,588,497,622,497,932,460,967,115,967],1);ring('fab',FAB,306,777,61);pad(84,732,231,825,2);pad(381,732,528,825,2);T(306,777,'C4',18,FAB,0,22);X(306,777);plus('silk',SILK,531,880,8);plus('fab',FAB,455,842,6.500);
T(664,763,'TP2',18,FAB,0,32);tp(662,819);T(482,1353,'TP3',18,FAB,0,32);tp(479,1407);
part(196,1003,323,1076,'C7');part(658,1297,785,1369,'C12');
cbox(346,1006,614,1331);[[369,423],[453,510],[540,594]].forEach(([a,b])=>pad(a,1014,b,1086,3.500));pad(411,1248,549,1320,5);silk([355,1098,355,1237,400,1237]);silk([605,1100,605,1237,558,1237]);fab([355,1100,567,1100,605,1135,605,1237,355,1237],1);path('silk',SILK,1,[614,1043,600,1052,614,1061],1,SILK);T(480,1166,'U3',16);X(480,1166);
cy([97,1174,139,1136,166,1136,166,1096,242,1096,242,1136,269,1136,311,1174,311,1348,242,1348,242,1387,166,1387,166,1348,97,1348]);silk([166,1139,140,1139,104,1176,104,1342,166,1342]);silk([242,1139,268,1139,304,1176,304,1342,242,1342]);fab([108,1178,142,1143,266,1143,301,1178,301,1338,108,1338],1);ring('fab',FAB,204,1241,31);pad(174,1104,234,1215,2.500);pad(174,1266,234,1377,2.500);T(204,1241,'C8',16,FAB,-90);X(204,1241);plus('silk',SILK,265,1118,4.500);plus('fab',FAB,247,1174,3.500);
cy([650,1024,718,1024,718,985,794,985,794,1024,862,1024,862,1196,820,1236,794,1236,794,1276,718,1276,718,1236,692,1236,650,1196]);silk([718,1028,656,1028,656,1194,692,1230,718,1230]);silk([794,1028,857,1028,857,1194,820,1230,794,1230]);fab([659,1033,853,1033,853,1192,818,1226,694,1226,659,1192],1);ring('fab',FAB,756,1130,31);pad(726,993,786,1104,2.500);pad(726,1155,786,1266,2.500);T(756,1130,'C6',16,FAB,-90);X(756,1130);plus('silk',SILK,694,1252,4.500);plus('fab',FAB,712,1195,3.500);
/* J5 J6 J7 */
[[0,'J5'],[92.300,'J6'],[184,'J7']].forEach(([dy,n])=>at(0,dy,()=>{
  cbox(961,916,1362,1162);sbox(973,928,1346,1150);fbox(979,934,1341,1144);silk([973,958,1042,958,1042,928]);silk([1096,928,1096,958,1225,958,1225,928]);silk([1279,928,1279,958,1346,958]);silk([973,1012,1003,1012,1003,1120,1318,1120,1318,1012,1346,1012]);silk([965,970,965,919,1010,919]);fab([1042,932,1070,971,1090,932]);
  ths(1038,984,1101,1055,5.700,1);thp(1162,1019,10.500,12.500,5.700);thp(1255,1019,10.500,12.500,5.700);T(1160,1118,n,18,FAB,0,20);}));
sec(1580,1090,3,3);
cy([40,66,398,66,398,208,428,208,428,320,398,320,398,460,40,460,-1,420,-1,320,-32,320,-32,208,-1,208,-1,104]);silk([5,208,5,104,44,71,392,71,392,208]);silk([5,320,5,420,44,456,392,456,392,320]);fab([8,106,46,75,388,75,388,452,46,452,8,418],1);ring('fab',FAB,198,264,61);pad(-24,216,123,309,2);pad(273,216,420,309,2);T(198,264,'C2',18,FAB,0,22);X(198,264);plus('silk',SILK,-29,160,8);plus('fab',FAB,50,199,6.500);
cy([-20,491,262,491,304,528,304,595,335,595,335,706,304,706,304,775,262,814,-20,814,-20,706,-50,706,-50,595,-20,595]);silk([-14,595,-14,496,260,496,299,532,299,595]);silk([-14,706,-14,808,260,808,299,772,299,706]);fab([-11,500,258,500,295,534,295,770,258,804,-11,804],1);ring('fab',FAB,144,650,49);pad(-42,606,87,699,2);pad(198,606,327,699,2);T(144,650,'C9',18,FAB,0,22);X(144,650);plus('silk',SILK,326,743,7);plus('fab',FAB,260,707,5.500);
part(670,82,725,190,'R10');part(670,265,725,376,'R12');part(670,451,725,559,'R16');
const qfet=(x,y,n)=>{cbox(x,y,x+142,y+126);pad(x+12,y+17,x+65,y+38,3.500);pad(x+12,y+86,x+65,y+109,3.500);pad(x+80,y+50,x+134,y+73,3.500);fbox(x+48,y+6,x+97,y+120);silk([x+48,y+4,x+98,y+4]);silk([x+48,y+122,x+98,y+122]);path('silk',SILK,1,[x+20,y-6,x+38,y-6,x+29,y+8],1,SILK);X(x+70,y+62);T(x+70,y+63,n,9);};
qfet(733,109,'Q1');qfet(739,295,'Q4');qfet(733,478,'Q5');
part(919,55,1031,110,'R7');part(919,238,1031,293,'R13');part(919,421,1031,476,'R17');
sbox(898,118,1153,230);sbox(898,301,1153,412);sbox(898,487,1153,595);
part(910,139,1037,208,'D5',1);part(913,322,1037,391,'D8',1);part(913,505,1037,577,'D9',1);
[['EN1',171],['EN2',355],['EN3',538]].forEach(([n,y])=>T(1078,y,n,18,SILK,-90,32,'DejaVu Sans Mono',700));

/* ---- lower part ---- */
sec(1210,1560,2.010,3);
lay.silk.push(`<path d="M1228.500 1589H1309Q1334 1590 1334 1615V1717Q1334 1742 1309 1743H1228.500" fill="none" stroke="${SILK}" stroke-width="2"/>`);
cbox(67,109,156,521);sbox(79,222,146,505);silk([146,222,199,222]);silk([146,320,199,320]);silk([146,418,199,418]);silk([79,160,79,127,112,127]);fab([80,222,80,150,96,130,145,130,145,222]);
T(110,320,'UART1',18,FAB,90,48);ths(90,144,133,207,5.500,0);[270,362,456].forEach(y=>thp(113,y,10.300,10.300,5.500));
[['RX',172,22],['TX',272,22],['33',365,22],['G',457,10],].forEach(([n,y,l])=>T(176,y,n,17,SILK,90,l,'DejaVu Sans Mono',700));T(226,320,'UART',18,SILK,90,42,'DejaVu Sans Mono',700);
part(278,106,315,214,'R18');part(278,254,315,361,'R19');part(433,136,506,187,'R8');part(433,283,506,338,'R9');part(427,199,512,272,'D6',1);part(427,346,512,419,'D7',1);
const qs=(x,y,n)=>{cbox(x,y,x+96,y+126);pad(x+8,y+17,x+42,y+39,3.500);pad(x+8,y+88,x+42,y+110,3.500);pad(x+53,y+50,x+88,y+74,3.500);fbox(x+33,y+7,x+64,y+120);silk([x+33,y+5,x+64,y+5]);path('silk',SILK,1,[x+14,y-6,x+25,y-6,x+20,y+10],1,SILK);X(x+48,y+63);T(x+48,y+63,n,9);};
qs(323,136,'Q2');qs(325,280,'Q3');
T(408,552,'BOOT',18,SILK,0,46,'DejaVu Sans Mono',700);T(1148,552,'RST',18,SILK,0,33,'DejaVu Sans Mono',700);
[[0,'SW1'],[367.700,'SW2']].forEach(([dx,n])=>at(dx,0,()=>{cbox(313,589,504,767);sbox(353,595,463,761);[[606,639],[715,749]].forEach(([a,b])=>{pad(316,a,350,b);pad(466,a,500,b);});ring('silk',SILK,408,678,13.700);[[365,610],[437,610],[365,722],[437,722]].forEach(p=>lay.silk.push(`<rect x="${px(p[0])}" y="${py(p[1])}" width="7" height="7.500" rx="2" fill="none" stroke="${SILK}"/>`));T(408,677,n,18,FAB,0,34);X(408,678);}));
part(218,622,252,731,'R20');part(266,622,303,731,'C14');part(1253,622,1289,731,'R21');part(1302,622,1338,731,'C15');part(964,631,1036,685,'C16');part(964,706,1036,761,'C17');
lay.silk.push(`<circle cx="${px(957)}" cy="${py(726)}" r="2" fill="${SILK}"/>`);
/* U4 module */
cbox(608,361,946,992);fbox(615,372,941,783,2);
lay.fab.push(`<defs><pattern id="ha" width="18" height="18" patternUnits="userSpaceOnUse"><path d="M-2 20L20 -2M7 29L29 7" stroke="#a8604f" stroke-width="1"/><path d="M-2 -2L20 20" stroke="#2f528f" stroke-width="1"/></pattern></defs><rect x="${px(616)}" y="${py(786)}" width="162" height="65" fill="url(#ha)"/>`);
silk([614,786,614,985,942,985,942,786],0,2);
const mp=(x,y,w,h)=>lay.pads.push(`<rect x="${px(x)-w/2}" y="${py(y)-h/2}" width="${w}" height="${h}" fill="${CU}" stroke="#5a2f78" stroke-width="1.600"/>`);
for(let i=0;i<13;i++){mp(660+i*19.700,396,6.500,11);mp(660+i*19.700,757,6.500,11.500);}
[[633,396],[925,396],[633,760],[925,760]].forEach(p=>mp(p[0],p[1],10,10));
for(let i=0;i<11;i++){mp(633,430+i*29.500,11,7);mp(925,430+i*29.500,11,7);}
[730,778,827].forEach(x=>[503,577,649].forEach(y=>mp(x,y,19,19.500)));
path('pads','none',0,[846,655,846,682,832,682],1,BG);
lay.cross.push(`<path d="M${px(757)} ${py(680)}h21M${px(778)} ${py(680)}v10" stroke="${CY}" stroke-width="2"/>`);
T(870,1031,'U4',18,SILK,0,23,'DejaVu Sans Mono',700);

/* ---------- unrouted connections ---------- */
sec(1210,570,3,2.958);
rat(424,539,606,1026);rat(424,629,513,1026);rat(422,720,420,1026);rat(415,830,324,1026);rat(754,868,138,1026);rat(738,440,750,748,754,868);rat(738,440,1162,583);rat(756,628,1162,369);rat(756,628,792,1026);rat(231,1026,792,1026);rat(792,1026,1124,947,1127,1347,1010,1540);rat(699,1026,606,1488);rat(699,1026,1345,1298,1902,1480);rat(231,1488,2000,1488);rat(988,510,756,628);
sec(1580,570,3,2.958);
rat(328,166,328,347,981,1026);rat(392,166,476,167,700,1488);rat(392,258,476,258,606,1488);rat(392,347,476,347,512,1488);rat(797,166,797,352,456,628);rat(50,369,456,628,497,1010);rat(50,583,230,895,454,868,420,1026,15,1530);rat(787,528,606,1026);rat(787,620,700,1026);rat(787,711,793,1026);rat(787,803,888,1026);rat(513,1026,1074,1026);rat(84,947,235,960);rat(84,1147,235,1158);rat(84,1347,235,1359);rat(235,1100,935,1568,975,1600);rat(235,1100,-255,1540,-255,1570);rat(981,1026,890,1488);rat(890,1488,895,1540);rat(981,1488,935,1568);rat(1074,1488,1025,1568);rat(420,1488,486,1568);
sec(1210,1090,3,3);
rat(138,-35,1160,266);rat(855,0,527,300,893,583,660,819);rat(829,583,955,583,1132,652,996,780,1253,1019);rat(160,300,768,583,848,780);rat(699,-35,1069,1019);rat(792,-35,950,480,1080,1019);rat(703,583,1160,266);rat(160,780,222,1040,205,1320);rat(453,780,396,1050);rat(453,780,662,819,1069,1019);rat(222,1040,755,1048,755,1210,687,1332,480,1284,479,1048);rat(290,1040,205,1160);rat(687,1332,850,1510);rat(755,1210,748,1440);rat(1069,1019,1069,1580);rat(1160,1019,1195,1440);rat(927,160,1024,-40);rat(1124,-20,1160,266);rat(945,400,955,583);rat(479,1284,479,1407,330,1650);rat(1069,1019,1225,1440);rat(1080,1019,1200,1440);rat(1160,1295,1095,1450);
sec(1580,1090,3,3);
rat(512,-35,512,1290);rat(607,-35,607,1290);rat(700,-35,700,1290);rat(460,0,699,288);rat(50,264,699,473);rat(345,264,770,208,775,391);rat(50,264,265,655,420,822);rat(890,0,1007,80,1010,541,1074,822);rat(895,0,944,541,981,822);rat(945,80,945,180,843,171);rat(950,0,775,323,430,1290);rat(1043,0,700,533,513,822);rat(697,164,770,137);rat(699,164,513,822,190,1440);rat(699,349,420,1150,240,1440);rat(699,533,210,1440);rat(770,575,513,822,143,1019);rat(143,1019,143,1580);rat(793,822,790,1290,790,1440);rat(887,822,825,1440);rat(981,822,883,1440);rat(607,822,750,1440);rat(700,822,765,1440);rat(981,1290,680,1440);rat(1074,1290,760,1440);rat(420,1290,290,1440);rat(420,1290,335,1440);rat(793,1290,888,1290);rat(775,391,950,365,975,357,845,357);rat(840,540,943,541);rat(699,533,770,505);rat(699,349,775,323);rat(50,1019,70,1290,100,1440);rat(50,1295,5,1420);rat(20,1290,85,1440);
sec(1210,1560,2.010,3);
rat(113,175,297,132,633,575);rat(113,270,297,275,330,320,348,308);rat(297,190,348,163,348,233);rat(113,362,235,645);rat(113,456,285,648,331,623,483,623);rat(490,160,717,160);rat(393,198,450,235,450,160);rat(350,310,350,379);rat(350,379,490,383,633,396,730,505,827,505,856,396);rat(505,-10,483,623);rat(297,335,348,308);rat(395,345,440,383);rat(300,160,630,610);rat(330,320,633,610,905,396);rat(235,707,285,707,333,733,483,733,633,610);rat(510,0,640,210,735,380);rat(490,383,585,510,633,575);rat(113,362,300,30);rat(895,0,633,460);rat(850,0,840,160,680,396);rat(880,0,700,396);rat(910,0,720,396);rat(890,0,660,390,633,490);rat(975,0,885,396);rat(955,0,760,396);rat(1250,0,680,396);rat(1290,0,720,396);rat(1262,0,1272,160);rat(1300,0,1272,380);rat(1337,0,1323,645);rat(1273,0,1271,200);rat(800,0,817,396);rat(805,0,925,550);rat(830,60,925,606);rat(840,0,840,160);rat(840,160,925,575);rat(778,160,739,396);rat(717,0,717,160);rat(748,0,717,160);rat(800,170,856,396);rat(840,160,780,396);rat(925,520,1075,733,1222,733,1270,707,1320,707);rat(925,664,1020,655,1320,645);rat(1020,660,1072,623,1222,623,1270,648);rat(925,695,925,760,633,760);rat(925,725,1000,730);rat(730,640,730,577,778,577,778,640);rat(778,505,778,560);rat(778,650,827,650,827,577);rat(778,680,778,760);rat(760,396,925,664);rat(905,396,925,400,925,430);rat(1020,655,960,640);

const g=(n,x='')=>`<g ${x}>${lay[n].join('')}</g>`, crisp='shape-rendering="crispEdges"';
document.getElementById('board').innerHTML=
 g('sheet',crisp)+g('grid','fill="#848484" '+crisp)+g('edge',crisp)+g('fab')+g('pads')+g('silk')+g('cy')+g('text')+g('cross',crisp)+
 g('rats','style="mix-blend-mode:screen"')+
 `<path d="M70 1632.500H3012M2026.500 212V2112" stroke="#b4b9be" stroke-width="1" ${crisp}/>`;
</script>
</body>
</html>
